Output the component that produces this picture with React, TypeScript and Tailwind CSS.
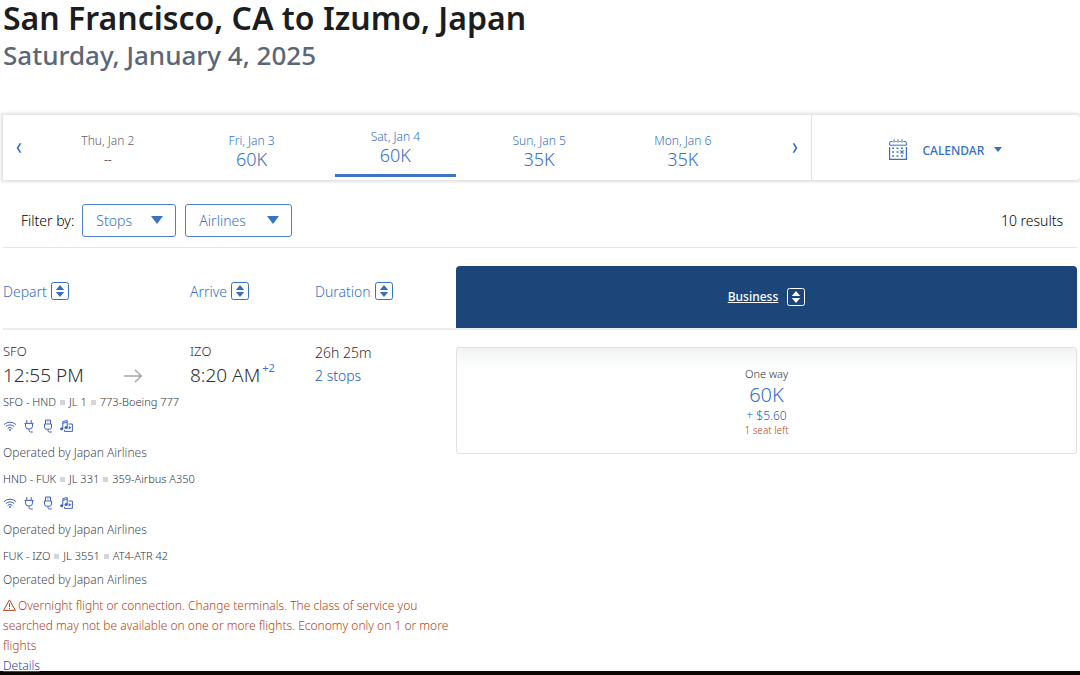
import type { ReactNode } from "react";
import clsx from "clsx";

type Day = { label: string; miles: string; active?: boolean; disabled?: boolean };

type Segment = { route: string; flight: string; aircraft: string; amenities: boolean };

const days: Day[] = [
  { label: "Thu, Jan 2", miles: "--", disabled: true },
  { label: "Fri, Jan 3", miles: "60K" },
  { label: "Sat, Jan 4", miles: "60K", active: true },
  { label: "Sun, Jan 5", miles: "35K" },
  { label: "Mon, Jan 6", miles: "35K" },
];

const segments: Segment[] = [
  { route: "SFO - HND", flight: "JL 1", aircraft: "773-Boeing 777", amenities: true },
  { route: "HND - FUK", flight: "JL 331", aircraft: "359-Airbus A350", amenities: true },
  { route: "FUK - IZO", flight: "JL 3551", aircraft: "AT4-ATR 42", amenities: false },
];

function Chevron({ flip }: { flip?: boolean }) {
  return (
    <svg viewBox="0 0 6 10" className={clsx("h-[10px] w-[6px]", flip && "-scale-x-100")} fill="currentColor" aria-hidden="true">
      <path d="M3.6 0.2H5.4L2.6 5L5.4 9.8H3.6L0.6 5Z" />
    </svg>
  );
}

function Triangle({ className }: { className: string }) {
  return (
    <svg viewBox="0 0 12 8" className={className} fill="currentColor" preserveAspectRatio="none" aria-hidden="true">
      <path d="M0 0H12L6 8Z" />
    </svg>
  );
}

function CalendarIcon() {
  return (
    <svg viewBox="0 0 18 21" className="h-[21px] w-[18px]" fill="none" stroke="currentColor" aria-hidden="true">
      <path d="M3.5 2.5H2A1.4 1.4 0 0 0 .6 4V6.2H17.4V4A1.4 1.4 0 0 0 16 2.5H14.5M6.3 2.5H7.7M10.3 2.5H11.7M5 .3V3.6M9 .3V3.6M13 .3V3.6" strokeWidth="1" />
      <path d="M.6 8V20.3H17.4V8" strokeWidth="1.2" />
      <path d="M3.2 9.2H5M7.6 9.2H9.4M12.1 9.2H13.9M3.2 13H5M7.6 13H9.4M3.2 17H5M7.6 17H9.4M12.1 17H13.9" strokeWidth="1.5" />
      <path d="M11.4 11.4L14.6 14.6M14.6 11.4L11.4 14.6" strokeWidth="1.2" />
    </svg>
  );
}

function SortIcon() {
  return (
    <svg viewBox="0 0 18 18" className="size-[18px] shrink-0" aria-hidden="true">
      <rect x=".5" y=".5" width="17" height="17" rx="2" fill="none" stroke="currentColor" />
      <path d="M9 3L13.2 8H4.8ZM9 15L4.8 10H13.2Z" fill="currentColor" />
    </svg>
  );
}

function Amenity({ label, children }: { label: string; children: ReactNode }) {
  return (
    <svg viewBox="0 0 14 14" className="size-[14px]" fill="none" stroke="currentColor" role="img" aria-label={label}>
      {children}
    </svg>
  );
}

function Amenities() {
  return (
    <div className="mt-2 flex h-4 items-center gap-[5px] text-[#3f63c4]">
      <Amenity label="Wi-Fi">
        <path d="M1 5.6A8.6 8.6 0 0 1 13 5.6M2.8 7.6A6 6 0 0 1 11.2 7.6M4.6 9.5A3.5 3.5 0 0 1 9.4 9.5" />
        <circle cx="7" cy="11" r=".9" fill="currentColor" stroke="none" />
      </Amenity>
      <Amenity label="Power outlet">
        <path d="M4.8 1V4M9.2 1V4M2.5 4.4H11.5M3.5 4.4V7.2A3.5 2.9 0 0 0 10.5 7.2V4.4M7 10.2V11.6A1.5 1.5 0 0 0 8.5 13H10.8" />
      </Amenity>
      <Amenity label="USB power">
        <path d="M4.5 5V1H9.5V5M6.2 2.8H6.8M7.6 2.8H8.2M3.5 5H10.5V8.2A2 2 0 0 1 8.5 10.2H5.5A2 2 0 0 1 3.5 8.2ZM7 10.2V11.6A1.4 1.4 0 0 0 8.4 13H10.8" />
      </Amenity>
      <Amenity label="Entertainment">
        <path d="M2.8 9.4V2.6L7.2 1.5V8.4M2.8 4.3L7.2 3.2M8.4 5H12.4V12.4H4.5V10.8" />
        <ellipse cx="1.7" cy="9.8" rx="1.6" ry="1.5" fill="currentColor" stroke="none" />
        <ellipse cx="6.1" cy="8.4" rx="1.6" ry="1.5" fill="currentColor" stroke="none" />
        <path d="M8.7 7.1L11.3 8.8L8.7 10.5Z" fill="currentColor" stroke="none" />
      </Amenity>
    </div>
  );
}

function FilterSelect({ id, label, className }: { id: string; label: string; className: string }) {
  return (
    <div className={clsx("relative text-[#3673c4]", className)}>
      <select
        id={id}
        aria-label={label}
        className="h-[33px] w-full appearance-none rounded-[3px] border border-[#4a80cf] bg-white pl-[13px] text-[14px] font-light"
      >
        <option>{label}</option>
      </select>
      <Triangle className="pointer-events-none absolute right-[13px] top-3 h-2 w-3" />
    </div>
  );
}

function DateBar() {
  return (
    <nav
      aria-label="Travel dates"
      className="ml-[3px] flex h-[65px] rounded-r bg-white text-[#3470c6] shadow-[0_0_3px_2px_rgba(0,0,0,0.12)]"
    >
      <button type="button" aria-label="Previous days" className="flex w-[33px] items-center pl-[13px]">
        <Chevron />
      </button>
      <div className="grid flex-1 grid-cols-5 items-end">
        {days.map((day) => (
          <button
            key={day.label}
            type="button"
            disabled={day.disabled}
            aria-current={day.active ? "date" : undefined}
            className={clsx(
              "mx-[11px] flex flex-col items-center",
              day.disabled && "text-[#5f6368]",
              day.active ? "mb-[3px] border-b-[3px] border-[#4073c6] pb-2" : "pb-[10px]",
            )}
          >
            <span className="text-[12px] font-light leading-[17px]">{day.label}</span>
            <span className={clsx("leading-[21px]", day.disabled ? "text-[12px]" : "text-[18px] font-light")}>
              {day.miles}
            </span>
          </button>
        ))}
      </div>
      <button type="button" aria-label="Next days" className="flex w-14 items-center justify-end pr-[13px]">
        <Chevron flip />
      </button>
      <button
        type="button"
        className="flex w-1/4 items-center justify-center border-l border-[#e2e2e2] pt-1 text-[12px] font-medium"
      >
        <CalendarIcon />
        <span className="ml-[15px] mr-[10px] pt-[2px]">CALENDAR</span>
        <Triangle className="h-[5px] w-2" />
      </button>
    </nav>
  );
}

function SortHeader({ label, className }: { label: string; className: string }) {
  return (
    <th scope="col" className={clsx("pt-[6px] text-left font-light", className)}>
      <button type="button" className="flex items-center gap-1 text-[14px] text-[#3470c6]">
        {label}
        <SortIcon />
      </button>
    </th>
  );
}

function SegmentInfo({ segment }: { segment: Segment }) {
  return (
    <li>
      <p className="flex items-center gap-1 text-[11px] font-light leading-4 text-[#2f343c]">
        <span>{segment.route}</span>
        <span className="size-[5px] bg-[#d4d5d8]" />
        <span>{segment.flight}</span>
        <span className="size-[5px] bg-[#d4d5d8]" />
        <span>{segment.aircraft}</span>
      </p>
      {segment.amenities && <Amenities />}
      <p className={clsx("text-[12px] font-light leading-4 text-[#474e5b]", segment.amenities ? "mt-[11px]" : "mt-2")}>
        Operated by Japan Airlines
      </p>
    </li>
  );
}

function Results() {
  return (
    <table className="w-full table-fixed border-collapse">
      <thead>
        <tr className="h-[81px] border-b-2 border-[#ececee]">
          <SortHeader label="Depart" className="w-[187px]" />
          <SortHeader label="Arrive" className="w-[125px]" />
          <SortHeader label="Duration" className="w-[141px]" />
          <th scope="col" className="p-0 pt-[17px]">
            <div className="flex h-[62px] items-center justify-center rounded-t bg-[#1c457a] text-white">
              <button type="button" className="flex items-center gap-[9px] text-[12px] font-medium">
                <span className="underline">Business</span>
                <SortIcon />
              </button>
            </div>
          </th>
        </tr>
      </thead>
      <tbody>
        <tr className="align-top font-light text-[#2b3036]">
          <td className="pt-[11px]">
            <div className="flex items-end">
              <div className="w-[120px]">
                <div className="text-[13px] leading-5">SFO</div>
                <div className="text-[19px] leading-7">12:55 PM</div>
              </div>
              <svg viewBox="0 0 20 14" className="mb-[6px] h-[14px] w-5" fill="none" stroke="#a3a6aa" aria-hidden="true">
                <path d="M1 7H18M12 1L18.3 7L12 13" strokeWidth="1.4" />
              </svg>
            </div>
          </td>
          <td className="pt-[11px]">
            <div className="text-[13px] leading-5">IZO</div>
            <div className="flex items-start gap-[2px] text-[19px] leading-7">
              8:20 AM
              <sup className="top-0 text-[11px] font-normal leading-[14px] text-[#3f6fd0]">+2</sup>
            </div>
          </td>
          <td className="pt-[11px] text-[14px] leading-[23px]">
            <div>26h 25m</div>
            <a href="#stops" className="text-[#2556bd]">2 stops</a>
          </td>
          <td rowSpan={2} className="pt-[17px]">
            <button
              type="button"
              className="flex h-[107px] w-full flex-col items-center justify-center rounded-[3px] border border-[#dfe1e3] bg-linear-to-b from-[#f1f3f3] to-white to-20%"
            >
              <span className="text-[11px] leading-4">One way</span>
              <span className="text-[20px] leading-[26px] text-[#3470c6]">60K</span>
              <span className="text-[12px] leading-4 text-[#2560bd]">+ $5.60</span>
              <span className="text-[10px] leading-3 text-[#b53f15]">1 seat left</span>
            </button>
          </td>
        </tr>
        <tr className="align-top">
          <td colSpan={3} className="pt-[5px]">
            <ul className="flex flex-col gap-[10px]">
              {segments.map((segment) => (
                <SegmentInfo key={segment.route} segment={segment} />
              ))}
            </ul>
            <p className="mt-2 text-[12px] font-light leading-5 text-[#b53f15]">
              <svg viewBox="0 0 13 12" className="mr-[2px] inline h-3 w-[13px] align-[-1px]" fill="none" stroke="currentColor" aria-hidden="true">
                <path d="M6.5 .9L12.4 11.4H.6ZM6.5 4.3V8M6.5 9V10.2" />
              </svg>
              Overnight flight or connection. Change terminals. The class of service you searched may not be available on
              one or more flights. Economy only on 1 or more flights
            </p>
            <a href="#details" className="mt-1 block text-[12px] font-light leading-[11px] text-[#2545b5] underline">
              Details
            </a>
          </td>
        </tr>
      </tbody>
    </table>
  );
}

export default function App() {
  return (
    <div className="bg-white font-['Noto_Sans','Open_Sans',sans-serif]">
      <header className="px-[3px] pb-[41px]">
        <h1 className="text-[32px] font-semibold leading-9 text-[#1b1d20]">San Francisco, CA to Izumo, Japan</h1>
        <p className="text-[26px] font-medium leading-[38px] text-[#5b6779]">Saturday, January 4, 2025</p>
      </header>
      <DateBar />
      <main className="px-[3px]">
        <div className="flex h-[68px] items-center border-b border-[#e6e6e6] pt-[13px] pl-[18px] pr-[14px] text-[14px] font-light text-black">
          <span className="mr-2">Filter by:</span>
          <FilterSelect id="stops" label="Stops" className="w-[94px]" />
          <FilterSelect id="airlines" label="Airlines" className="ml-[9px] w-[107px]" />
          <span className="ml-auto">10 results</span>
        </div>
        <Results />
      </main>
      <footer className="h-1 bg-[#0b0704]" />
    </div>
  );
}
